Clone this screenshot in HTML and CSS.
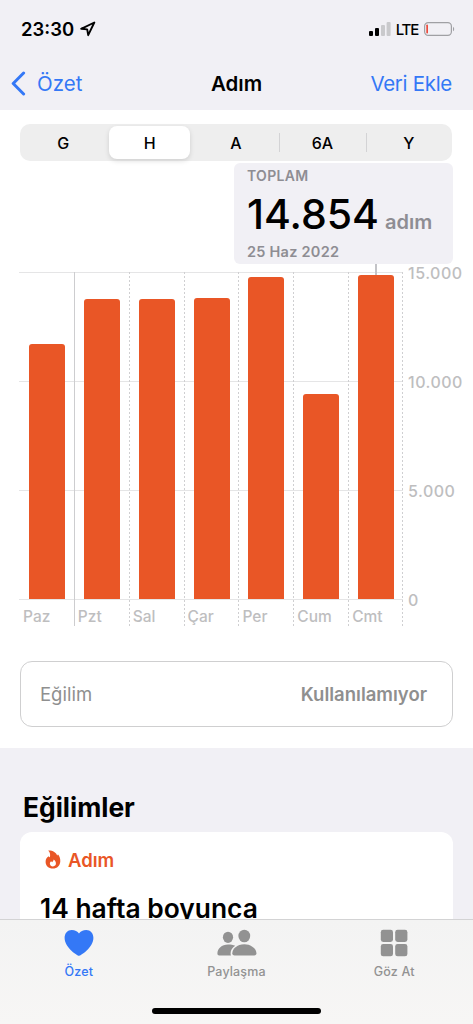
FILE: index.html
```html
<!DOCTYPE html>
<html lang="tr">
<head>
    <meta charset="UTF-8">
    <meta name="viewport" content="width=device-width, initial-scale=1.0">
    <title>Adım</title>
    <link rel="stylesheet" href="styles.css">
</head>
<body>
    <header class="header">
        <div class="status-bar">
            <div class="status-left">
                <span class="time">23:30</span>
                <svg width="16" height="16" viewBox="0 0 16 16" fill="none" stroke="#000" stroke-width="1.9" stroke-linejoin="round">
                    <path d="M14.3 1.5L1.2 7.8L7.2 8.4L8.2 14.2Z"/>
                </svg>
            </div>
            <div class="status-right">
                <svg width="22" height="14" viewBox="0 0 22 14">
                    <rect x="0" y="9" width="4" height="5" rx="1"/>
                    <rect x="6" y="6" width="4" height="8" rx="1"/>
                    <rect x="12" y="3" width="4" height="11" rx="1" fill="#c9c9cc"/>
                    <rect x="17.6" y="0" width="4" height="14" rx="1" fill="#c9c9cc"/>
                </svg>
                <span class="network">LTE</span>
                <svg width="31" height="14" viewBox="0 0 31 14">
                    <rect x="0.6" y="0.6" width="26.8" height="12.8" rx="3.6" fill="none" stroke="#a0a0a4" stroke-width="1.2"/>
                    <rect x="2.3" y="2.5" width="1.7" height="9" rx="0.8" fill="#eb4b3d"/>
                    <path d="M29 4.7C30.6 5.4 30.6 8.6 29 9.3Z" fill="#a0a0a4"/>
                </svg>
            </div>
        </div>
        <nav class="nav-bar">
            <a class="back">
                <svg width="15" height="25" viewBox="0 0 15 25" fill="none" stroke="#3478f6" stroke-width="3" stroke-linecap="round" stroke-linejoin="round">
                    <path d="M12.6 2L2.2 12.5L12.6 23"/>
                </svg>
                <span class="back-text">Özet</span>
            </a>
            <h1>Adım</h1>
            <a class="add-data">Veri Ekle</a>
        </nav>
    </header>

    <main class="content">
        <div class="segments">
            <div class="segment">G</div>
            <div class="segment active">H</div>
            <div class="segment">A</div>
            <div class="segment line">6A</div>
            <div class="segment line">Y</div>
        </div>

        <div class="summary">
            <div class="summary-label">TOPLAM</div>
            <div class="summary-value"><span class="number">14.854</span><span class="unit">adım</span></div>
            <div class="summary-date">25 Haz 2022</div>
        </div>

        <div class="chart">
            <div class="days">
                <div class="day first"><div class="bar" style="height: 255px;"></div><span class="day-name">Paz</span></div>
                <div class="day week"><div class="bar" style="height: 300px;"></div><span class="day-name">Pzt</span></div>
                <div class="day"><div class="bar" style="height: 300px;"></div><span class="day-name">Sal</span></div>
                <div class="day"><div class="bar" style="height: 301px;"></div><span class="day-name">Çar</span></div>
                <div class="day"><div class="bar" style="height: 322px;"></div><span class="day-name">Per</span></div>
                <div class="day"><div class="bar" style="height: 205px;"></div><span class="day-name">Cum</span></div>
                <div class="day last"><div class="bar selected" style="height: 324px;"></div><span class="day-name">Cmt</span></div>
            </div>
            <div class="axis">
                <span>15.000</span>
                <span>10.000</span>
                <span>5.000</span>
                <span>0</span>
            </div>
        </div>

        <div class="trend-row">
            <span class="trend-name">Eğilim</span>
            <span class="trend-value">Kullanılamıyor</span>
        </div>

        <section class="trends">
            <h2>Eğilimler</h2>
            <div class="card">
                <div class="card-title">
                    <svg width="16" height="19" viewBox="0 0 16 19">
                        <path fill="#e95626" fill-rule="evenodd" d="M3.2 0.4C7.5 0.2 11.4 2.2 12.1 5.6C12.6 5.4 12.9 4.8 12.9 4.2C14.6 6.1 15.4 8.7 15.3 11.2C15.1 15.7 12.2 18.5 7.9 18.5C3.6 18.5 0.6 15.8 0.6 12C0.6 9.3 1.7 7.3 3.7 6.3C3.9 6.9 4.2 7.2 4.8 7.3C5.5 4.9 5.2 2.2 3.2 0.4ZM8.6 9.6C8.6 10.9 7.9 11.6 7.2 12.2C6.7 12 6.4 11.7 6.2 11.2C5.2 11.9 4.8 12.8 4.9 13.8C5 15.4 6.2 16.4 7.9 16.4C9.7 16.4 10.9 15.3 10.9 13.6C10.9 11.9 10.1 10.5 8.6 9.6Z"/>
                    </svg>
                    <span class="card-name">Adım</span>
                </div>
                <p class="card-text">14 hafta boyunca</p>
            </div>
        </section>
    </main>

    <footer class="tab-bar">
        <div class="tabs">
            <div class="tab active">
                <svg width="30" height="28" viewBox="0 0 30 28" fill="#3478f6">
                    <path d="M15 27C14.2 27 0.6 19.2 0.6 8.8C0.6 4.3 3.6 1 7.7 1C11 1 13.5 2.2 15 4.6C16.5 2.2 19 1 22.3 1C26.4 1 29.4 4.3 29.4 8.8C29.4 19.2 15.8 27 15 27Z"/>
                </svg>
                <span class="tab-ozet">Özet</span>
            </div>
            <div class="tab">
                <svg width="40" height="28" viewBox="0 0 40 28" fill="#929292">
                    <ellipse cx="11" cy="8.3" rx="5.1" ry="5.6"/>
                    <ellipse cx="27.3" cy="7" rx="5.9" ry="6.3"/>
                    <path d="M18.2 16.8C15.4 18.5 13.6 21.4 13.6 24.3C13.6 25.2 13.7 25.8 14 26.4H2.3C1 26.4 0.4 25.7 0.4 24.4C0.4 20 4.8 15.6 11 15.6C13.8 15.6 16.3 16 18.2 16.8Z"/>
                    <path d="M27.3 15.3C34.6 15.3 39.4 20.2 39.4 24.3C39.4 25.8 38.7 26.4 37.2 26.4H17.6C16 26.4 15.3 25.8 15.3 24.3C15.3 20.2 20 15.3 27.3 15.3Z"/>
                </svg>
                <span class="tab-paylasma">Paylaşma</span>
            </div>
            <div class="tab">
                <svg width="28" height="28" viewBox="0 0 28 28" fill="#929292">
                    <rect x="0.8" y="0.8" width="12.2" height="12.2" rx="2.4"/>
                    <rect x="15.2" y="0.8" width="12.2" height="12.2" rx="2.4"/>
                    <rect x="0.8" y="15.1" width="12.2" height="12.2" rx="2.4"/>
                    <rect x="15.2" y="15.1" width="12.2" height="12.2" rx="2.4"/>
                </svg>
                <span class="tab-goz">Göz At</span>
            </div>
        </div>
        <div class="home-indicator"></div>
    </footer>
</body>
</html>
```
FILE: styles.css
```css
* {
    box-sizing: border-box;
}
body {
    margin: 0;
    width: 473px;
    height: 1024px;
    display: flex;
    flex-direction: column;
    overflow: hidden;
    background-color: #fff;
    color: #000;
    font-family: Inter, "Liberation Sans", sans-serif;
}
h1, h2, p {
    margin: 0;
}
svg {
    display: block;
    flex-shrink: 0;
}
.header {
    height: 110px;
    flex-shrink: 0;
    background-color: #f1f0f5;
}
.status-bar {
    display: flex;
    justify-content: space-between;
    align-items: center;
    height: 58px;
    padding: 0 18px 0 21px;
}
.status-left {
    display: flex;
    align-items: center;
    gap: 6px;
}
.time {
    font-size: 18.5px;
    font-weight: 600;
}
.status-right {
    display: flex;
    align-items: center;
    gap: 5px;
}
.network {
    font-size: 15px;
    font-weight: 500;
    letter-spacing: -1.2px;
    margin-right: 1px;
}
.nav-bar {
    display: grid;
    grid-template-columns: 1fr auto 1fr;
    align-items: center;
    height: 51px;
    padding: 0 21px 0 11px;
}
.back {
    display: flex;
    align-items: center;
    gap: 11px;
    color: #3478f6;
    font-size: 20.5px;
}
h1 {
    padding-left: 10px;
    font-size: 20.5px;
    font-weight: 600;
}
.add-data {
    justify-self: end;
    color: #3478f6;
    font-size: 20.5px;
    letter-spacing: -0.3px;
}
.content {
    flex: 1;
    min-height: 0;
    overflow: hidden;
    display: flex;
    flex-direction: column;
}
.segments {
    display: grid;
    grid-template-columns: repeat(5, 1fr);
    flex-shrink: 0;
    height: 37px;
    margin: 14px 21px 2px 20px;
    padding: 2px 0;
    border-radius: 10px;
    background-color: #eeeeee;
}
.segment {
    display: flex;
    align-items: center;
    justify-content: center;
    font-size: 16px;
    font-weight: 500;
}
.segment.active {
    margin: 0 3px;
    border-radius: 8px;
    background-color: #fff;
    box-shadow: 0 2px 5px rgba(0, 0, 0, 0.13);
}
.segment.line {
    background: linear-gradient(#d3d3d5, #d3d3d5) 0 center / 1px 19px no-repeat;
}
.summary {
    width: 219px;
    height: 101px;
    flex-shrink: 0;
    margin-left: 234px;
    padding: 4px 13px 0;
    border-radius: 6px;
    background-color: #f1f0f5;
    color: #8e8d93;
}
.summary-label {
    font-size: 14px;
    font-weight: 600;
    letter-spacing: 0.3px;
    line-height: 18px;
}
.summary-value {
    display: flex;
    align-items: baseline;
    gap: 6px;
    height: 58px;
    line-height: 58px;
}
.number {
    color: #000;
    font-size: 41px;
    font-weight: 500;
}
.unit {
    font-size: 20px;
    font-weight: 600;
}
.summary-date {
    font-size: 14.5px;
    font-weight: 600;
    letter-spacing: 0.25px;
    line-height: 18px;
}
.chart {
    display: flex;
    flex-shrink: 0;
    height: 354px;
    margin: 8px 0 0 19px;
}
.days {
    display: flex;
    width: 384px;
    /* one line for every 5.000 steps */
    background: repeating-linear-gradient(#e5e5e6 0 1px, transparent 1px 109px) 0 0 / 100% 328px no-repeat;
}
.day {
    flex: 1;
    display: flex;
    flex-direction: column;
    justify-content: flex-end;
    background: repeating-linear-gradient(#cfcfd1 0 2px, transparent 2px 4px) 0 0 / 1px 100% no-repeat;
}
.day.first {
    background: none;
}
.day.week {
    background: linear-gradient(#cdcdcf, #cdcdcf) 0 0 / 1px 100% no-repeat;
}
.day.last {
    background: repeating-linear-gradient(#cfcfd1 0 2px, transparent 2px 4px) 0 0 / 1px 100% no-repeat,
        repeating-linear-gradient(#cfcfd1 0 2px, transparent 2px 4px) 100% 0 / 1px 100% no-repeat;
}
.bar {
    position: relative;
    width: 36px;
    margin-left: 10px;
    border-radius: 3px 3px 0 0;
    background-color: #e95626;
}
.bar.selected::before {
    content: "";
    position: absolute;
    left: 17px;
    bottom: 100%;
    width: 2px;
    height: 11px;
    background-color: #c3c3c7;
}
.day-name {
    height: 27px;
    padding-left: 4px;
    color: #bebebf;
    font-size: 15.5px;
    font-weight: 500;
    line-height: 36px;
}
.axis {
    display: flex;
    flex-direction: column;
    justify-content: space-between;
    height: 347px;
    margin: -9px 0 0 5px;
    color: #bebebf;
    font-size: 16px;
    font-weight: 500;
    letter-spacing: 0.5px;
    line-height: 20px;
}
.trend-row {
    display: flex;
    flex-shrink: 0;
    align-items: center;
    justify-content: space-between;
    height: 66px;
    margin: 35px 20px 21px;
    padding: 0 25px 0 19px;
    border: 1px solid #cfcfd0;
    border-radius: 12px;
    color: #8f8f8f;
    font-size: 18.5px;
}
.trend-value {
    font-weight: 600;
}
.trends {
    flex: 1;
    padding: 43px 20px 0;
    background-color: #f1f0f5;
}
h2 {
    padding-left: 3px;
    font-size: 26.4px;
    font-weight: 700;
    line-height: 32px;
}
.card {
    height: 160px;
    margin-top: 9px;
    padding: 17px 20px 0 25px;
    border-radius: 12px;
    background-color: #fff;
}
.card-title {
    display: flex;
    align-items: center;
    gap: 7px;
    height: 21px;
    color: #e95626;
    font-size: 18.5px;
    font-weight: 600;
}
.card-text {
    margin: 22px 0 0 -5px;
    font-size: 26.4px;
    font-weight: 600;
    line-height: 32px;
}
.tab-bar {
    height: 105px;
    flex-shrink: 0;
    border-top: 1px solid #d3d3d4;
    background: linear-gradient(#f3f3f3, #f7f6f5);
}
.tabs {
    display: flex;
    height: 90px;
}
.tab {
    flex: 1;
    display: flex;
    flex-direction: column;
    align-items: center;
    padding-top: 9px;
    color: #929292;
    font-size: 12.5px;
    font-weight: 500;
    letter-spacing: 0.15px;
    line-height: 30px;
}
.tab.active {
    color: #3478f6;
}
.home-indicator {
    width: 169px;
    height: 6px;
    margin: -2px auto 0;
    border-radius: 3px;
    background-color: #000;
}
```
